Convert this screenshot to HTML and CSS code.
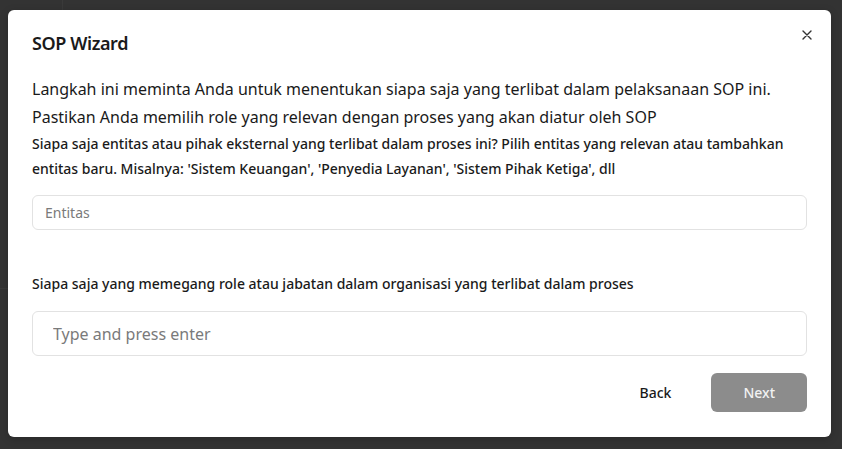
FILE: index.html
```html
<!DOCTYPE html>
<html lang="id">
<head>
<meta charset="utf-8">
<title>SOP Wizard</title>
<link rel="stylesheet" href="styles.css">
</head>
<body>
<div class="backdrop">
  <div class="bg-line bg-line-v"></div>
  <div class="bg-line bg-line-h"></div>
  <section class="modal" role="dialog" aria-labelledby="title">
    <header class="modal-header">
      <h2 id="title" class="modal-title">SOP Wizard</h2>
      <button class="close" aria-label="Close">
        <svg width="10" height="10" viewBox="0 0 10 10"><path d="M1 1L9 9M9 1L1 9" stroke="#333" stroke-width="1.4" stroke-linecap="round"/></svg>
      </button>
    </header>
    <div class="modal-body">
      <p class="intro">Langkah ini meminta Anda untuk menentukan siapa saja yang terlibat dalam pelaksanaan SOP ini. Pastikan Anda memilih role yang relevan dengan proses yang akan diatur oleh SOP</p>
      <label class="label">Siapa saja entitas atau pihak eksternal yang terlibat dalam proses ini? Pilih entitas yang relevan atau tambahkan entitas baru. Misalnya: 'Sistem Keuangan', 'Penyedia Layanan', 'Sistem Pihak Ketiga', dll</label>
      <input class="field field-sm" type="text" placeholder="Entitas">
      <label class="label label-2">Siapa saja yang memegang role atau jabatan dalam organisasi yang terlibat dalam proses</label>
      <input class="field field-md" type="text" placeholder="Type and press enter">
    </div>
    <footer class="modal-footer">
      <button class="btn btn-ghost">Back</button>
      <button class="btn btn-solid">Next</button>
    </footer>
  </section>
</div>
</body>
</html>
```

FILE: styles.css
```css
* { box-sizing: border-box; }
html, body { margin: 0; padding: 0; }
body {
  background: #333333;
  font-family: "Noto Sans", "Open Sans", sans-serif;
  color: #1a1a1a;
  width: 842px;
  height: 449px;
  overflow: hidden;
}
.backdrop {
  position: relative;
  height: 449px;
  padding: 10px 11px 12px 8px;
  display: flex;
}
.bg-line { position: absolute; background: #3a3a3a; }
.bg-line-v { left: 62px; top: 0; width: 1px; height: 10px; }
.bg-line-h { left: 0; top: 288px; width: 8px; height: 1px; }
.modal {
  position: relative;
  flex: 1;
  background: #ffffff;
  border-radius: 6px;
  display: flex;
  flex-direction: column;
  box-shadow: 0 2px 8px rgba(0,0,0,0.2);
}
.modal-header {
  padding: 20px 24px 0;
  display: flex;
  align-items: center;
  justify-content: space-between;
}
.modal-title {
  margin: 0;
  font-size: 18px;
  line-height: 27px;
  font-weight: 600;
  letter-spacing: -0.4px;
  color: #1a1a1a;
}
.close {
  position: absolute;
  top: 9px;
  right: 8px;
  width: 32px;
  height: 32px;
  border: 0;
  background: transparent;
  display: flex;
  align-items: center;
  justify-content: center;
  padding: 0;
}
.modal-body {
  padding: 18px 24px 0;
  display: flex;
  flex-direction: column;
}
.intro {
  margin: 0;
  font-size: 16px;
  line-height: 28px;
  color: #1a1a1a;
}
.label {
  display: block;
  font-size: 14px;
  line-height: 25px;
  font-weight: 500;
  color: #1a1a1a;
}
.label-2 { margin-top: 41px; }
.field {
  width: 100%;
  border: 1px solid #e2e2e2;
  border-radius: 6px;
  background: #fff;
  font-family: inherit;
  color: #1a1a1a;
  outline: none;
}
.field::placeholder { color: #7a7a7a; }
.field-sm {
  margin-top: 14px;
  height: 35px;
  padding: 0 12px;
  font-size: 14px;
}
.field-md {
  margin-top: 15px;
  height: 45px;
  padding: 0 20px;
  font-size: 16px;
}
.modal-footer {
  padding: 17px 24px 0;
  display: flex;
  justify-content: flex-end;
  gap: 8px;
}
.btn {
  height: 39px;
  min-width: 95px;
  padding: 0 32px;
  border: 0;
  border-radius: 6px;
  font-family: inherit;
  font-size: 14px;
  font-weight: 500;
}
.btn-ghost { background: transparent; color: #1a1a1a; }
.btn-solid { background: #8c8c8c; color: #f2f2f2; }
```
